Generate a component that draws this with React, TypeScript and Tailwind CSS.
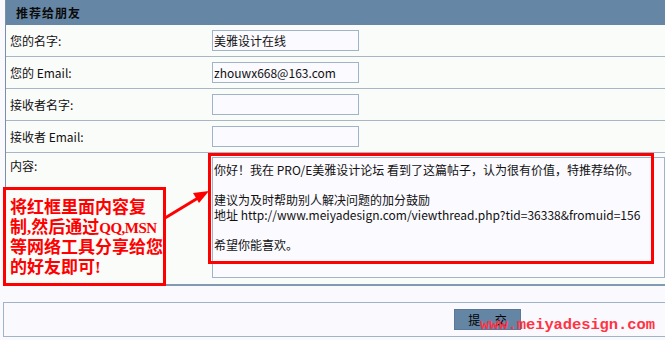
import React from "react";

const rows = [
    { label: "您的名字:", value: "美雅设计在线" },
    { label: "您的 Email:", value: "zhouwx668@163.com" },
    { label: "接收者名字:", value: "" },
    { label: "接收者 Email:", value: "" },
];

export default function App() {
    return (
        <div className="relative w-[665px] h-[340px] overflow-hidden bg-[#faf9fd] font-['Noto_Sans_CJK_SC',sans-serif] text-[12px] text-[#111]">
            <div className="ml-[5px] w-[720px] border-l border-[#7890a8]">
                <div className="h-[25px] bg-[#6587a5] pl-[10px] flex items-center">
                    <span className="font-bold text-[12px] text-[#0a0a0a] tracking-[1px]">推荐给朋友</span>
                </div>
                {rows.map((r) => (
                    <div
                        key={r.label}
                        className="h-[32px] flex items-center border-b border-[#a6b6c7] bg-[#fafcfa]">
                        <div className="w-[206px] pl-[4px] leading-none">{r.label}</div>
                        <div className="w-[147px] h-[21px] border border-[#a0b4c8] bg-[#fbfaff] flex items-center px-px leading-none text-[12px]">
                            {r.value}
                        </div>
                    </div>
                ))}
                <div className="h-[133px] flex border-b-2 border-[#8199b1] bg-[#fafcfa]">
                    <div className="w-[206px] pl-[4px] pt-[7px] leading-none">内容:</div>
                    <div className="mt-[4px] w-[453px] h-[121px] border border-[#a0b4c8] bg-[#fbfaff] pl-px pt-[4px] leading-[15px] text-[12px]">
                        <p>你好！我在 PRO/E美雅设计论坛 看到了这篇帖子，认为很有价值，特推荐给你。</p>
                        <p>&nbsp;</p>
                        <p>建议为及时帮助别人解决问题的加分鼓励</p>
                        <p>地址 http://www.meiyadesign.com/viewthread.php?tid=36338&amp;fromuid=156</p>
                        <p>&nbsp;</p>
                        <p>希望你能喜欢。</p>
                    </div>
                </div>
            </div>

            <div className="mt-[16px] ml-[3px] w-[720px] h-[35px] border border-[#a0b4c8] bg-[#faf9fd] flex items-center">
                <button className="ml-[450px] w-[67px] h-[21px] bg-[#6585a5] border border-[#5a7898] text-[12px] text-black leading-none tracking-[0.5em] pl-[0.5em]">
                    提 交
                </button>
            </div>

            {/* red annotation over the content box */}
            <div className="absolute left-[208px] top-[153px] w-[446px] h-[111px] border-[3px] border-[#ff0000]" />

            <div className="absolute left-[3px] top-[187px] w-[163px] h-[99px] border-[3px] border-[#ff0000] bg-[#fafcfa] pl-[4px] pt-[8px] text-[#ff0000] font-bold text-[17px] leading-[20px] whitespace-nowrap overflow-hidden font-['Liberation_Serif','Noto_Sans_CJK_SC',serif]">
                <p>将红框里面内容复</p>
                <p>
                    制,然后通过<span className="text-[15px] tracking-[-0.5px]">QQ,MSN</span>
                </p>
                <p>等网络工具分享给您</p>
                <p>的好友即可!</p>
            </div>

            <svg className="absolute left-0 top-0" width="665" height="340">
                <line x1="165" y1="218" x2="198" y2="198" stroke="#ff0000" strokeWidth="3" />
                <polygon points="209,191 193,193 199,203" fill="#ff0000" />
            </svg>

            <div className="absolute left-[480px] top-[318px] text-[#ff3344] font-bold text-[15.5px] leading-none font-['Liberation_Mono',monospace] tracking-[-0.1px]">
                www.meiyadesign.com
            </div>
        </div>
    );
}
